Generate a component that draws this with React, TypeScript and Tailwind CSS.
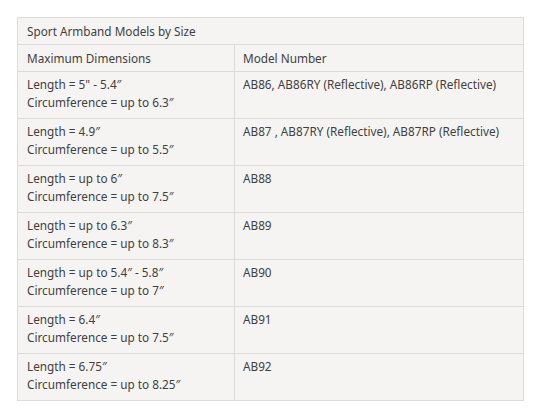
import React from "react";

const ROWS: [string, string, string][] = [
  ['Length = 5" - 5.4″', "Circumference = up to 6.3″", "AB86, AB86RY (Reflective), AB86RP (Reflective)"],
  ["Length = 4.9″", "Circumference = up to 5.5″", "AB87 , AB87RY (Reflective), AB87RP (Reflective)"],
  ["Length = up to 6″", "Circumference = up to 7.5″", "AB88"],
  ["Length = up to 6.3″", "Circumference = up to 8.3″", "AB89"],
  ["Length = up to 5.4″ - 5.8″", "Circumference = up to 7″", "AB90"],
  ["Length = 6.4″", "Circumference = up to 7.5″", "AB91"],
  ["Length = 6.75″", "Circumference = up to 8.25″", "AB92"],
];

export default function App() {
  return (
    <div className="w-[544px] h-[417px] bg-white pt-[17px] pl-[17px]">
      <table
        className="w-[507px] border-collapse bg-[#f5f4f3] text-[11.75px] text-[#3f3f3f]"
        style={{ fontFamily: '"Noto Sans", "Open Sans", sans-serif' }}
      >
        <tbody>
          <tr className="h-[27px]">
            <td colSpan={2} className="border border-[#dcdbda] px-[9px] py-0 leading-[18px]">
              Sport Armband Models by Size
            </td>
          </tr>
          <tr className="h-[27px]">
            <td className="w-[217px] border border-[#dcdbda] px-[9px] py-0 leading-[18px]">Maximum Dimensions</td>
            <td className="border border-[#dcdbda] px-[8px] py-0 leading-[18px]">Model Number</td>
          </tr>
          {ROWS.map(([a, b, m]) => (
            <tr key={m} className="h-[47px]">
              <td className="border border-[#dcdbda] px-[9px] pt-[3px] pb-[5px] align-top leading-[18px]">
                <div>{a}</div>
                <div>{b}</div>
              </td>
              <td className="border border-[#dcdbda] px-[8px] pt-[3px] align-top leading-[18px]">{m}</td>
            </tr>
          ))}
        </tbody>
      </table>
    </div>
  );
}
